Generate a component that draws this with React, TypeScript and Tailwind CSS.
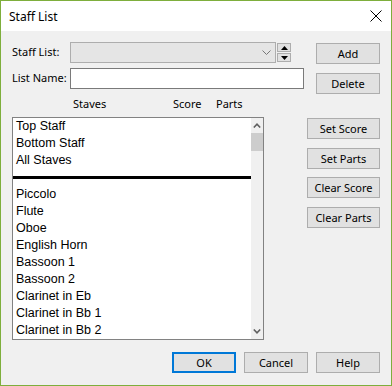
import React from "react";

const ui = { fontFamily: '"Noto Sans", "Liberation Sans", sans-serif' };
const listFont = { fontFamily: '"Liberation Sans", Arial, sans-serif' };

function Btn({ label, w = 64, className = "" }: { label: string; w?: number; className?: string }) {
  return (
    <div
      className={`h-[21px] bg-[#e1e1e1] border border-[#adadad] flex items-center justify-center text-[11px] text-black leading-none ${className}`}
      style={{ width: w }}
    >
      {label}
    </div>
  );
}

const top = ["Top Staff", "Bottom Staff", "All Staves"];
const items = [
  "Piccolo",
  "Flute",
  "Oboe",
  "English Horn",
  "Bassoon 1",
  "Bassoon 2",
  "Clarinet in Eb",
  "Clarinet in Bb 1",
  "Clarinet in Bb 2",
];

export default function App() {
  return (
    <div className="w-[392px] h-[386px] border border-[#7eae3c] flex flex-col bg-[#f0f0f0] text-black" style={ui}>
      {/* Title bar */}
      <div className="h-[30px] bg-white flex items-center justify-between shrink-0">
        <span className="ml-[8px] text-[12px] leading-none pt-[1px]">Staff List</span>
        <svg width="12" height="12" viewBox="0 0 12 12" className="mr-[9px]">
          <path d="M0.5 0.5 L11.5 11.5 M11.5 0.5 L0.5 11.5" stroke="#000" strokeWidth="1" />
        </svg>
      </div>

      {/* Body */}
      <div className="flex-1 flex flex-col pl-[11px] pr-[11px]">
        {/* Row 1 */}
        <div className="flex items-start mt-[11px]">
          <div className="w-[58px] h-[21px] flex items-center text-[11px]">Staff List:</div>
          <div className="w-[206px] h-[21px] bg-[#e5e5e5] border border-[#adadad] flex items-center justify-end pr-[4px]">
            <svg width="9" height="6" viewBox="0 0 9 6">
              <path d="M0.5 0.5 L4.5 4.5 L8.5 0.5" stroke="#777" strokeWidth="1" fill="none" />
            </svg>
          </div>
          <div className="ml-[1px] mt-[1px] flex flex-col gap-[1px]">
            <div className="w-[14px] h-[9px] bg-[#e1e1e1] border border-[#adadad] flex items-center justify-center">
              <svg width="7" height="4" viewBox="0 0 7 4"><path d="M0 4 L3.5 0 L7 4 Z" fill="#000" /></svg>
            </div>
            <div className="w-[14px] h-[9px] bg-[#e1e1e1] border border-[#adadad] flex items-center justify-center">
              <svg width="7" height="4" viewBox="0 0 7 4"><path d="M0 0 L3.5 4 L7 0 Z" fill="#000" /></svg>
            </div>
          </div>
          <Btn label="Add" className="ml-[25px] mt-[1px]" />
        </div>

        {/* Row 2 */}
        <div className="flex items-start mt-[4px]">
          <div className="w-[58px] h-[21px] flex items-center text-[11px]">List Name:</div>
          <div className="w-[234px] h-[21px] bg-white border border-[#7a7a7a]" />
          <Btn label="Delete" className="ml-[12px] mt-[5px]" />
        </div>

        {/* Header */}
        <div className="relative h-[14px] mt-[3px] text-[11px] leading-[14px]">
          <span className="absolute left-[61px] top-0">Staves</span>
          <span className="absolute left-[161px] top-0">Score</span>
          <span className="absolute left-[204px] top-0">Parts</span>
        </div>

        {/* Main */}
        <div className="flex items-start mt-[6px]">
          <div className="w-[252px] h-[223px] border border-[#828282] bg-white flex">
            <div className="flex-1 flex flex-col pl-[3px] text-[12.5px]" style={listFont}>
              {top.map((t) => (
                <div key={t} className="h-[17px] leading-[17px] whitespace-nowrap">{t}</div>
              ))}
              <div className="h-[17px] flex items-center -ml-[3px]">
                <div className="w-full h-[3px] bg-black" />
              </div>
              {items.map((t) => (
                <div key={t} className="h-[17px] leading-[17px] whitespace-nowrap">{t}</div>
              ))}
            </div>
            <div className="w-[12px] bg-[#f0f0f0] flex flex-col">
              <div className="h-[15px] flex items-center justify-center">
                <svg width="8" height="5" viewBox="0 0 8 5">
                  <path d="M0.8 4.5 L4 1.2 L7.2 4.5" stroke="#606060" strokeWidth="1.6" fill="none" />
                </svg>
              </div>
              <div className="h-[18px] bg-[#cdcdcd]" />
              <div className="flex-1" />
              <div className="h-[15px] flex items-center justify-center">
                <svg width="8" height="5" viewBox="0 0 8 5">
                  <path d="M0.8 0.5 L4 3.8 L7.2 0.5" stroke="#606060" strokeWidth="1.6" fill="none" />
                </svg>
              </div>
            </div>
          </div>
          <div className="ml-[43px] mt-[1px] flex flex-col">
            <Btn label="Set Score" w={73} />
            <Btn label="Set Parts" w={73} className="mt-[9px]" />
            <Btn label="Clear Score" w={73} className="mt-[8px]" />
            <Btn label="Clear Parts" w={73} className="mt-[9px]" />
          </div>
        </div>

        {/* Footer */}
        <div className="flex justify-end gap-[8px] mt-[12px]">
          <div className="w-[64px] h-[21px] bg-[#e1e1e1] border-2 border-[#0078d7] flex items-center justify-center text-[11px] leading-none">
            OK
          </div>
          <Btn label="Cancel" />
          <Btn label="Help" />
        </div>
      </div>
    </div>
  );
}
